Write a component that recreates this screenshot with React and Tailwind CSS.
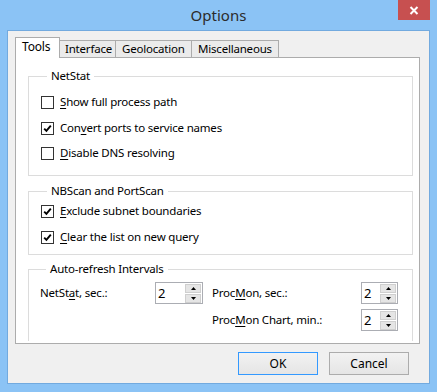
import React from "react";

const font = { fontFamily: '"Segoe UI", "Noto Sans", sans-serif' };

function Check({ checked }) {
  return (
    <span className="w-[13px] h-[13px] border border-[#333333] bg-white flex items-center justify-center shrink-0">
      {checked && (
        <svg width="9" height="9" viewBox="0 0 9 9">
          <path d="M1.2 4.6 L3.4 6.9 L7.8 1.6" fill="none" stroke="#000" strokeWidth="1.9" />
        </svg>
      )}
    </span>
  );
}

function CheckRow({ checked, children, className = "" }) {
  return (
    <div className={`flex items-center h-[20px] gap-[6px] ${className}`}>
      <Check checked={checked} />
      <span className="leading-[16px]">{children}</span>
    </div>
  );
}

function Spin({ width }) {
  return (
    <div className={`${width} h-[22px] border border-[#abadb3] bg-white flex items-center shrink-0`}>
      <span className="pl-[2px] leading-[16px] text-[13px]">2</span>
      <div className="ml-auto mr-px flex flex-col gap-px">
        <div className="w-[16px] h-[9px] bg-[#e5e5e5] border border-[#cfcfcf] flex items-center justify-center">
          <svg width="5" height="3" viewBox="0 0 5 3">
            <path d="M0 3 L2.5 0 L5 3 Z" fill="#000" />
          </svg>
        </div>
        <div className="w-[16px] h-[9px] bg-[#e5e5e5] border border-[#cfcfcf] flex items-center justify-center">
          <svg width="5" height="3" viewBox="0 0 5 3">
            <path d="M0 0 L5 0 L2.5 3 Z" fill="#000" />
          </svg>
        </div>
      </div>
    </div>
  );
}

function Group({ title, children, className = "" }) {
  return (
    <fieldset className={`border border-[#dcdcdc] mx-[12px] mr-[6px] ${className}`}>
      <legend className="ml-[6px] px-[4px] leading-[16px]">{title}</legend>
      {children}
    </fieldset>
  );
}

export default function App() {
  return (
    <div
      className="w-[437px] h-[392px] bg-[#8bc3f5] flex flex-col text-[11.5px] tracking-[-0.2px] text-black"
      style={font}
    >
      <div className="h-[30px] grid grid-cols-[1fr_auto_1fr]">
        <div />
        <div className="self-center text-[15px] tracking-normal text-[#2b2b2b] leading-[20px]">Options</div>
        <div className="flex justify-end pr-[7px]">
          <div className="w-[32px] h-[20px] bg-[#c75050] flex items-center justify-center">
            <svg width="10" height="9" viewBox="0 0 10 9">
              <path d="M1.5 1 L8.5 8 M8.5 1 L1.5 8" stroke="#fff" strokeWidth="2" />
            </svg>
          </div>
        </div>
      </div>

      <div className="mx-[7px] h-[354px] border border-[#72aadf] bg-[#f0f0f0] flex flex-col pt-[6px] pl-[7px] pr-[9px]">
        <div className="flex items-end h-[20px]">
          <div className="w-[45px] h-[21px] -mb-px relative z-10 bg-white border border-[#acacac] border-b-0 pl-[6px] leading-[18px] text-[12px]">
            Tools
          </div>
          <div className="w-[57px] h-[17px] -ml-px bg-[#ebebeb] border border-[#acacac] border-b-0 pl-[5px] leading-[15px]">
            Interface
          </div>
          <div className="w-[77px] h-[17px] -ml-px bg-[#ebebeb] border border-[#acacac] border-b-0 pl-[6px] leading-[15px]">
            Geolocation
          </div>
          <div className="w-[88px] h-[17px] -ml-px bg-[#ebebeb] border border-[#acacac] border-b-0 pl-[6px] leading-[15px]">
            Miscellaneous
          </div>
        </div>

        <div className="w-[405px] h-[287px] border border-[#acacac] bg-white">
          <div className="h-[283px] overflow-hidden pt-[10px]">
            <Group title="NetStat" className="pb-[12px] pl-[12px]">
              <CheckRow className="mt-[8px]">
                <u className="underline-offset-2">S</u>how full process path
              </CheckRow>
              <CheckRow checked className="mt-[6px]">
                Con<u className="underline-offset-2">v</u>ert ports to service names
              </CheckRow>
              <CheckRow className="mt-[5px]">
                <u className="underline-offset-2">D</u>isable DNS resolving
              </CheckRow>
            </Group>

            <Group title="NBScan and PortScan" className="mt-[7px] pb-[7px] pl-[12px]">
              <CheckRow checked className="mt-[2px]">
                <u className="underline-offset-2">E</u>xclude subnet boundaries
              </CheckRow>
              <CheckRow checked className="mt-[6px]">
                <u className="underline-offset-2">C</u>lear the list on new query
              </CheckRow>
            </Group>

            <Group title="Auto-refresh Intervals" className="mt-[6px] pb-[20px] pl-[11px] pr-[14px]">
              <div className="flex items-center mt-[5px]">
                <span className="w-[115px]">
                  NetSt<u className="underline-offset-2">a</u>t, sec.:
                </span>
                <Spin width="w-[48px]" />
                <span className="ml-[9px]">
                  Proc<u className="underline-offset-2">M</u>on, sec.:
                </span>
                <div className="ml-auto">
                  <Spin width="w-[37px]" />
                </div>
              </div>
              <div className="flex items-center mt-[5px]">
                <span className="ml-[172px]">
                  Proc<u className="underline-offset-2">M</u>on Chart, min.:
                </span>
                <div className="ml-auto">
                  <Spin width="w-[37px]" />
                </div>
              </div>
            </Group>
          </div>
        </div>

        <div className="flex justify-end gap-[11px] mt-[8px] pr-[11px]">
          <button className="w-[80px] h-[23px] border border-[#3399ff] bg-gradient-to-b from-[#f2f2f2] to-[#e5e5e5] leading-[16px] text-[12px] tracking-normal">
            OK
          </button>
          <button className="w-[80px] h-[23px] border border-[#acacac] bg-gradient-to-b from-[#f2f2f2] to-[#e5e5e5] leading-[16px] text-[12px] tracking-normal">
            Cancel
          </button>
        </div>
      </div>
    </div>
  );
}
